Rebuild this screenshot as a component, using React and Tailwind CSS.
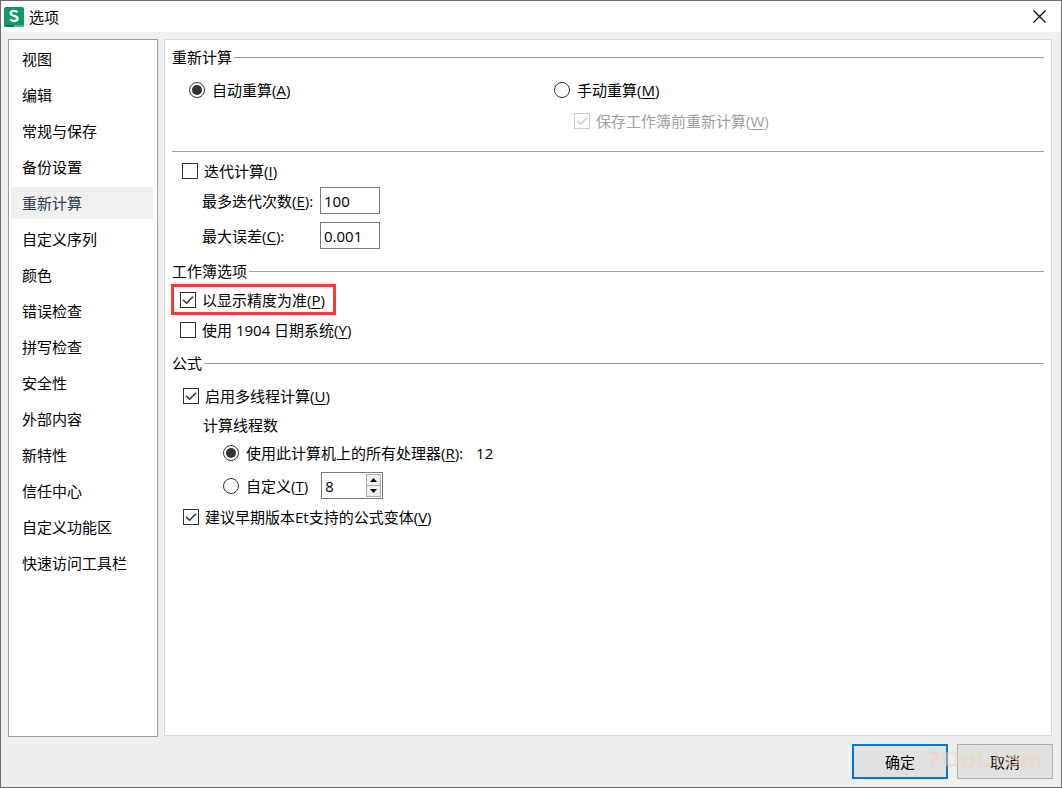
import React, { useState } from "react";

const menu = [
  "视图",
  "编辑",
  "常规与保存",
  "备份设置",
  "重新计算",
  "自定义序列",
  "颜色",
  "错误检查",
  "拼写检查",
  "安全性",
  "外部内容",
  "新特性",
  "信任中心",
  "自定义功能区",
  "快速访问工具栏",
];

const Logo = () => (
  <svg className="w-5 h-5" viewBox="0 0 20 20" aria-hidden="true">
    <rect width="20" height="20" rx="2" fill="#129a66" />
    <path d="M0 18h10v2H2a2 2 0 0 1-2-2z" fill="#0b7a50" />
    <path d="M10 18h10a2 2 0 0 1-2 2h-8z" fill="#3db98a" />
    <path
      d="M13.300 5.300C12.500 4.300 11.400 3.900 10 3.900 8.100 3.900 6.700 4.800 6.700 6.300c0 3.400 6.800 1.600 6.800 5.100 0 1.600-1.500 2.600-3.500 2.600-1.500 0-2.800-.5-3.600-1.600"
      fill="none"
      stroke="#fff"
      strokeWidth="2.3"
    />
  </svg>
);

// underlined access key, e.g. (A)
const Key = ({ k }) => (
  <>
    (<span className="underline underline-offset-2">{k}</span>)
  </>
);

const Check = ({ children, disabled, ...rest }) => (
  <label
    className={
      disabled
        ? "flex items-center gap-[6px] h-5 text-[#a0a0a0]"
        : "flex items-center gap-[6px] h-5"
    }
  >
    <span className="grid">
      <input
        type="checkbox"
        disabled={disabled}
        className="peer col-start-1 row-start-1 appearance-none w-4 h-4 border border-[#333] bg-white disabled:border-[#ccc]"
        {...rest}
      />
      <svg
        className="hidden peer-checked:block pointer-events-none col-start-1 row-start-1 w-4 h-4 text-[#333] peer-disabled:text-[#ccc]"
        viewBox="0 0 16 16"
        fill="none"
        stroke="currentColor"
        strokeWidth="1.5"
      >
        <path d="M3 7.800l3.500 3.500 6.500-6.600" />
      </svg>
    </span>
    <span>{children}</span>
  </label>
);

const Radio = ({ children, ...rest }) => (
  <label className="flex items-center gap-[7px] h-5">
    <span className="grid place-items-center">
      <input
        type="radio"
        className="peer col-start-1 row-start-1 appearance-none w-4 h-4 rounded-full border border-[#333] bg-white"
        {...rest}
      />
      <span className="hidden peer-checked:block pointer-events-none col-start-1 row-start-1 w-[10px] h-[10px] rounded-full bg-[#333]" />
    </span>
    <span>{children}</span>
  </label>
);

const Heading = ({ children }) => (
  <h2 className="flex items-center h-5 gap-[2px]">
    {children}
    <span className="flex-1 h-px bg-[#a0a0a0]" />
  </h2>
);

const Arrow = ({ down }) => (
  <svg className="w-[7px] h-1" viewBox="0 0 7 4" aria-hidden="true">
    <path d={down ? "M0 0h7L3.500 4z" : "M0 4h7L3.500 0z"} fill="#000" />
  </svg>
);

export default function App() {
  const [active, setActive] = useState("重新计算");
  const [mode, setMode] = useState("auto");
  const [threads, setThreads] = useState("all");
  const [count, setCount] = useState(8);

  return (
    <div className="min-h-screen flex flex-col border border-[#6e6e6e] bg-[#efefef] text-black text-[15px] leading-5 font-['Open_Sans','Noto_Sans_CJK_SC',sans-serif]">
      {/* Title bar */}
      <header className="flex items-center justify-between h-[31px] pl-[3px] pr-[15px] bg-white">
        <div className="flex items-center gap-[5px]">
          <Logo />
          <h1>选项</h1>
        </div>
        <button type="button" aria-label="关闭">
          <svg className="w-[13px] h-[13px]" viewBox="0 0 13 13" fill="none" stroke="#000" strokeWidth="1.2">
            <path d="M.5.5l12 12M12.500.5l-12 12" />
          </svg>
        </button>
      </header>

      <div className="flex-1 flex gap-[6px] pt-[7px] pl-[7px] pr-[9px]">
        {/* Sidebar */}
        <nav className="w-[150px] shrink-0 flex flex-col gap-1 pt-[3px] pl-[2px] pr-1 border border-[#a0a0a0] bg-white">
          {menu.map((item) => (
            <button
              key={item}
              type="button"
              onClick={() => setActive(item)}
              className={
                item === active
                  ? "h-8 pl-[11px] text-left bg-[#f0f0f0] text-[#2b3a4f]"
                  : "h-8 pl-[11px] text-left"
              }
            >
              {item}
            </button>
          ))}
        </nav>

        {/* Settings */}
        <main className="flex-1 mb-px px-[7px] pt-[7px] border border-[#d9d9d9] bg-white">
          <Heading>重新计算</Heading>
          <div className="grid grid-cols-[365fr_490fr] pl-[17px] mt-[13px]">
            <Radio name="mode" checked={mode === "auto"} onChange={() => setMode("auto")}>
              自动重算
              <Key k="A" />
            </Radio>
            <div>
              <Radio name="mode" checked={mode === "manual"} onChange={() => setMode("manual")}>
                手动重算
                <Key k="M" />
              </Radio>
              <div className="pl-5 mt-[11px]">
                <Check disabled defaultChecked>
                  保存工作簿前重新计算
                  <Key k="W" />
                </Check>
              </div>
            </div>
          </div>

          <hr className="mt-5 border-[#a0a0a0]" />
          <div className="pl-[10px] mt-[9px]">
            <Check>
              迭代计算
              <Key k="I" />
            </Check>
            <div className="flex items-center pl-5 mt-[6px]">
              <label htmlFor="times" className="w-[118px]">
                最多迭代次数
                <Key k="E" />:
              </label>
              <input id="times" defaultValue="100" className="w-[60px] h-[27px] px-[3px] border border-[#7a7a7a]" />
            </div>
            <div className="flex items-center pl-5 mt-2">
              <label htmlFor="diff" className="w-[118px]">
                最大误差
                <Key k="C" />:
              </label>
              <input id="diff" defaultValue="0.001" className="w-[60px] h-[27px] px-[3px] border border-[#7a7a7a]" />
            </div>
          </div>

          <div className="mt-3">
            <Heading>工作簿选项</Heading>
          </div>
          <div className="flex items-center w-fit h-[31px] mt-[3px] -ml-px pl-[6px] pr-2 border-3 border-[#f93a37]">
            <Check defaultChecked>
              以显示精度为准
              <Key k="P" />
            </Check>
          </div>
          <div className="pl-2 mt-[5px]">
            <Check>
              使用 1904 日期系统
              <Key k="Y" />
            </Check>
          </div>

          <div className="mt-[13px]">
            <Heading>公式</Heading>
          </div>
          <div className="pl-[11px] mt-[13px]">
            <Check defaultChecked>
              启用多线程计算
              <Key k="U" />
            </Check>
            <p className="pl-5 mt-[9px]">计算线程数</p>
            <div className="flex items-center gap-[13px] pl-10 mt-2">
              <Radio name="threads" checked={threads === "all"} onChange={() => setThreads("all")}>
                使用此计算机上的所有处理器
                <Key k="R" />:
              </Radio>
              <span>12</span>
            </div>
            <div className="flex items-center gap-[13px] pl-10 mt-[9px]">
              <Radio name="threads" checked={threads === "custom"} onChange={() => setThreads("custom")}>
                自定义
                <Key k="T" />
              </Radio>
              <div className="flex w-[62px] h-[27px] p-px border border-[#7a7a7a]">
                <input
                  aria-label="自定义"
                  value={count}
                  onChange={(e) => setCount(e.target.value)}
                  className="flex-1 min-w-0 pl-[2px]"
                />
                <div className="w-[15px] flex flex-col">
                  <button
                    type="button"
                    aria-label="增加"
                    onClick={() => setCount(Number(count) + 1)}
                    className="flex-1 flex items-center justify-center border border-[#adadad] bg-[#f0f0f0]"
                  >
                    <Arrow />
                  </button>
                  <button
                    type="button"
                    aria-label="减少"
                    onClick={() => setCount(Number(count) - 1)}
                    className="flex-1 flex items-center justify-center border border-t-0 border-[#adadad] bg-[#f0f0f0]"
                  >
                    <Arrow down />
                  </button>
                </div>
              </div>
            </div>
            <div className="mt-2">
              <Check defaultChecked>
                建议早期版本Et支持的公式变体
                <Key k="V" />
              </Check>
            </div>
          </div>
        </main>
      </div>

      {/* Footer */}
      <footer className="relative flex justify-end gap-[9px] pt-[7px] pr-2 pb-2">
        <button type="button" className="w-24 h-[35px] border-2 border-[#0078d7] bg-[#e1e1e1]">
          确定
        </button>
        <button type="button" className="w-24 h-[35px] border border-[#adadad] bg-[#e1e1e1]">
          取消
        </button>
        <span className="absolute right-[18px] top-[9px] text-[22px] leading-7 font-bold text-[#f5d2b0]/50 pointer-events-none font-['DejaVu_Sans',sans-serif]">
          7Ool.com
        </span>
      </footer>
    </div>
  );
}
